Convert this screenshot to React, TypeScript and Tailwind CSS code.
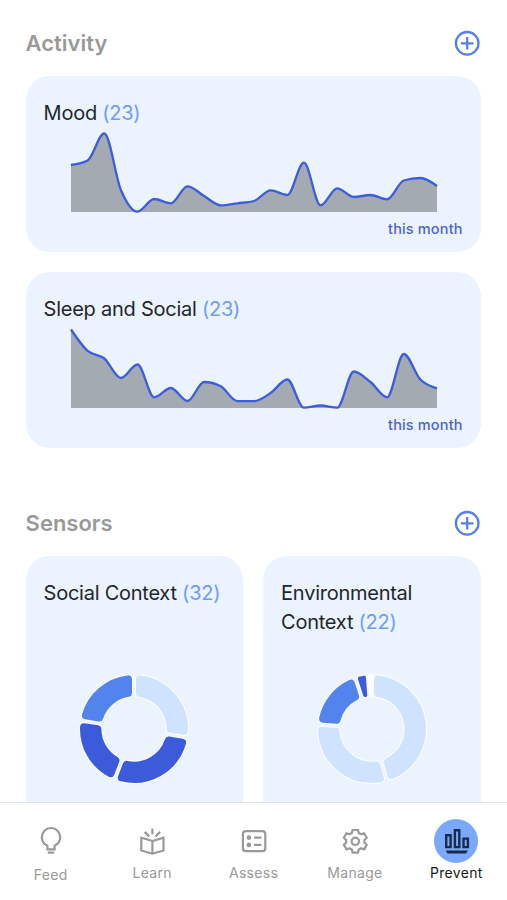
import type { ReactNode } from "react";

const CHART_WIDTH = 366;
const CHART_HEIGHT = 82;
const BASELINE = 79.5;

const mood = [46.5, 51, 78.2, 21.5, -0.2, 12.5, 8.2, 25.2, 15.5, 6.2, 8.2, 10.5, 21.2, 16.5, 48.8, 6.2, 23.2, 14.5, 16.5, 12.2, 31, 33.5, 25.5];
const sleep = [78, 56.6, 49, 29.5, 43, 10.2, 19.5, 6.5, 25.5, 21.2, 6.4, 6.4, 14.5, 28, -0.1, 2, -0.1, 36, 25.5, 10.2, 53.5, 28, 19.2];

// monotone cubic through evenly spaced points
function curve(values: number[]) {
    const step = CHART_WIDTH / (values.length - 1);
    const ys = values.map((v) => BASELINE - v);
    const slopes = ys.slice(1).map((y, i) => (y - ys[i]) / step);
    const tangents = ys.map((_, i) => {
        if (i === 0 || i === ys.length - 1) return 0;
        const a = slopes[i - 1];
        const b = slopes[i];
        if (a * b <= 0) return 0;
        return Math.sign(a) * 2 * Math.min(Math.abs(a), Math.abs(b), Math.abs(a + b) / 4);
    });
    const last = ys.length - 1;
    tangents[0] = (3 * slopes[0] - tangents[1]) / 2;
    tangents[last] = (3 * slopes[last - 1] - tangents[last - 1]) / 2;
    let d = `M0,${ys[0]}`;
    for (let i = 1; i < ys.length; i++) {
        const x0 = (i - 1) * step;
        const x1 = i * step;
        d += `C${x0 + step / 3},${ys[i - 1] + (tangents[i - 1] * step) / 3} ${x1 - step / 3},${ys[i] - (tangents[i] * step) / 3} ${x1},${ys[i]}`;
    }
    return d;
}

function Title({ name, count }: { name: string; count: number }) {
    return (
        <div className="text-[20px] leading-[29px] tracking-[-0.25px] text-[#22262c]">
            {name} <span className="text-[#6f9df5]">{`(${count})`}</span>
        </div>
    );
}

function ActivityCard({ name, count, values }: { name: string; count: number; values: number[] }) {
    const line = curve(values);
    return (
        <div className="h-44 rounded-[24px] bg-[#ebf3ff] px-[18px] pt-[23px]">
            <Title name={name} count={count} />
            <svg width={CHART_WIDTH} height={CHART_HEIGHT} className="mt-1 ml-[27px] overflow-visible">
                <path d={`${line}V${BASELINE + 0.5}H0Z`} fill="#a3aab2" />
                <path d={line} fill="none" stroke="#3c5ddd" strokeWidth="2.3" />
            </svg>
            <div className="mt-1.5 text-right text-[14.5px] leading-[18px] font-medium tracking-[0.15px] text-[#4c63d2]">this month</div>
        </div>
    );
}

type Slice = { from: number; to: number; color: string; round?: number };

const social: Slice[] = [
    { from: 0, to: 99, color: "#cfe3ff" },
    { from: 99, to: 201, color: "#3b5bdb" },
    { from: 201, to: 279, color: "#3b5bdb" },
    { from: 279, to: 360, color: "#5383ec" },
];
const environment: Slice[] = [
    { from: 354, to: 365, color: "#ffffff", round: 1 },
    { from: 360, to: 524, color: "#cfe3ff" },
    { from: 164, to: 275, color: "#cfe3ff" },
    { from: 275, to: 342, color: "#5383ec" },
    { from: 342, to: 355.5, color: "#3b5bdb", round: 2 },
];

function slicePath({ from, to, round = 4 }: Slice) {
    const outer = 54 - round;
    const inner = 32.6 + round;
    const inset = round + 2;
    const point = (r: number, deg: number, side: number) => {
        const a = (deg * Math.PI) / 180 + side * Math.asin(inset / r);
        return `${r * Math.sin(a)},${-r * Math.cos(a)}`;
    };
    const large = to - from > 180 ? 1 : 0;
    return `M${point(outer, from, 1)}A${outer},${outer} 0 ${large} 1 ${point(outer, to, -1)}L${point(inner, to, -1)}A${inner},${inner} 0 ${large} 0 ${point(inner, from, 1)}Z`;
}

function SensorCard({ name, count, slices }: { name: string; count: number; slices: Slice[] }) {
    return (
        <div className="flex h-[280px] flex-col rounded-[24px] bg-[#ebf3ff] px-[18px] pt-[23px]">
            <div className="h-[90px]">
                <Title name={name} count={count} />
            </div>
            <svg viewBox="-60 -60 120 120" width="120" height="120" className="self-center">
                {slices.map((s) => (
                    <path key={s.from} d={slicePath(s)} fill="#fff" stroke="#fafcff" strokeWidth={(s.round ?? 4) * 2 + 2.4} strokeLinejoin="round" />
                ))}
                {slices.map((s) => (
                    <path key={s.from} d={slicePath(s)} fill={s.color} stroke={s.color} strokeWidth={(s.round ?? 4) * 2} strokeLinejoin="round" />
                ))}
            </svg>
        </div>
    );
}

function SectionHeader({ title }: { title: string }) {
    return (
        <div className="flex h-8 items-center justify-between">
            <h2 className="text-[22px] font-semibold text-[#999]">{title}</h2>
            <button aria-label={`Add ${title}`} className="mr-px">
                <svg width="26" height="26" viewBox="0 0 26 26" fill="none" stroke="#5580e8" strokeWidth="2.3">
                    <circle cx="13.2" cy="13.3" r="11.3" />
                    <path d="M13.2 7v12.6M6.9 13.3h12.6" />
                </svg>
            </button>
        </div>
    );
}

function NavItem({ label, active, low, children }: { label: string; active?: boolean; low?: boolean; children: ReactNode }) {
    return (
        <div className={`flex flex-1 flex-col items-center text-sm leading-5 ${active ? "text-[#161a20]" : "text-[#999]"} ${low ? "pt-[18px]" : "pt-4"}`}>
            <div className={`flex h-11 w-11 items-center justify-center rounded-full ${active ? "bg-[#7aa9fb]" : ""}`}>
                <svg width="30" height="30" viewBox="0 0 30 30" fill="none" stroke="currentColor" strokeWidth="2.2" className="overflow-visible">
                    {children}
                </svg>
            </div>
            <div className="tracking-[0.3px]">{label}</div>
        </div>
    );
}

export default function App() {
    return (
        <div className="flex h-[900px] w-full flex-col overflow-hidden bg-white font-['Inter',sans-serif]">
            <div className="h-[802px] overflow-hidden pt-[27px] pr-[26.4px] pl-[25.6px]">
                <SectionHeader title="Activity" />
                <div className="mt-[17px] flex flex-col gap-5">
                    <ActivityCard name="Mood" count={23} values={mood} />
                    <ActivityCard name="Sleep and Social" count={23} values={sleep} />
                </div>
                <div className="mt-[59px]">
                    <SectionHeader title="Sensors" />
                </div>
                <div className="mt-[17px] grid grid-cols-2 gap-5">
                    <SensorCard name="Social Context" count={32} slices={social} />
                    <SensorCard name="Environmental Context" count={22} slices={environment} />
                </div>
            </div>
            <nav className="flex h-[98px] border-t border-[#dde3ec] bg-white">
                <NavItem label="Feed" low>
                    <path d="M11.4 21.3v-3.6c-3.4-1.7-5.6-4.8-5.6-8.5a9.2 9.2 0 0 1 18.4 0c0 3.7-2.2 6.8-5.6 8.5v3.6z" />
                    <path d="M11.8 24.6h6.4" />
                </NavItem>
                <NavItem label="Learn">
                    <path d="M15.4 15 4.3 11.7v12.8l11.1 3.2 11.1-3.2V11.7zV27.7M15.4 2.4v5.8M7.7 5.9l4.5 4.5M23.1 5.9l-4.5 4.5" />
                </NavItem>
                <NavItem label="Assess">
                    <rect x="3.9" y="5.1" width="22.4" height="20" rx="2.8" />
                    <path d="M15 11.6h7.4M15 18.9h7.4" />
                    <circle cx="9.9" cy="11.6" r="2.3" fill="currentColor" stroke="none" />
                    <circle cx="9.9" cy="18.9" r="2.3" fill="currentColor" stroke="none" />
                </NavItem>
                <NavItem label="Manage">
                    <path
                        strokeLinejoin="round"
                        d="M12.5 4h5.6l.5 2.9 2.4 1.4 3.1-1.1 2.7 4.6-2.4 2.2v2.6l2.4 2.2-2.7 4.6-3.1-1.1-2.4 1.4-.5 2.9h-5.6l-.5-2.9-2.4-1.4-3.1 1.1-2.7-4.6 2.4-2.2V14l-2.4-2.2 2.7-4.6 3.1 1.1L12 6.9z"
                    />
                    <circle cx="15.3" cy="15.3" r="3.7" />
                </NavItem>
                <NavItem label="Prevent" active>
                    <g stroke="#182c48" strokeWidth="2.4">
                        <path d="M5.2 9.2h4.4v11.9H5.2zM13.9 4.2h4.4v16.9h-4.4zM22.5 12.6h4.4v8.5h-4.4z" />
                        <path d="M4.8 24.6h22l-1.6 3H6.4z" fill="#182c48" stroke="none" />
                    </g>
                </NavItem>
            </nav>
        </div>
    );
}
